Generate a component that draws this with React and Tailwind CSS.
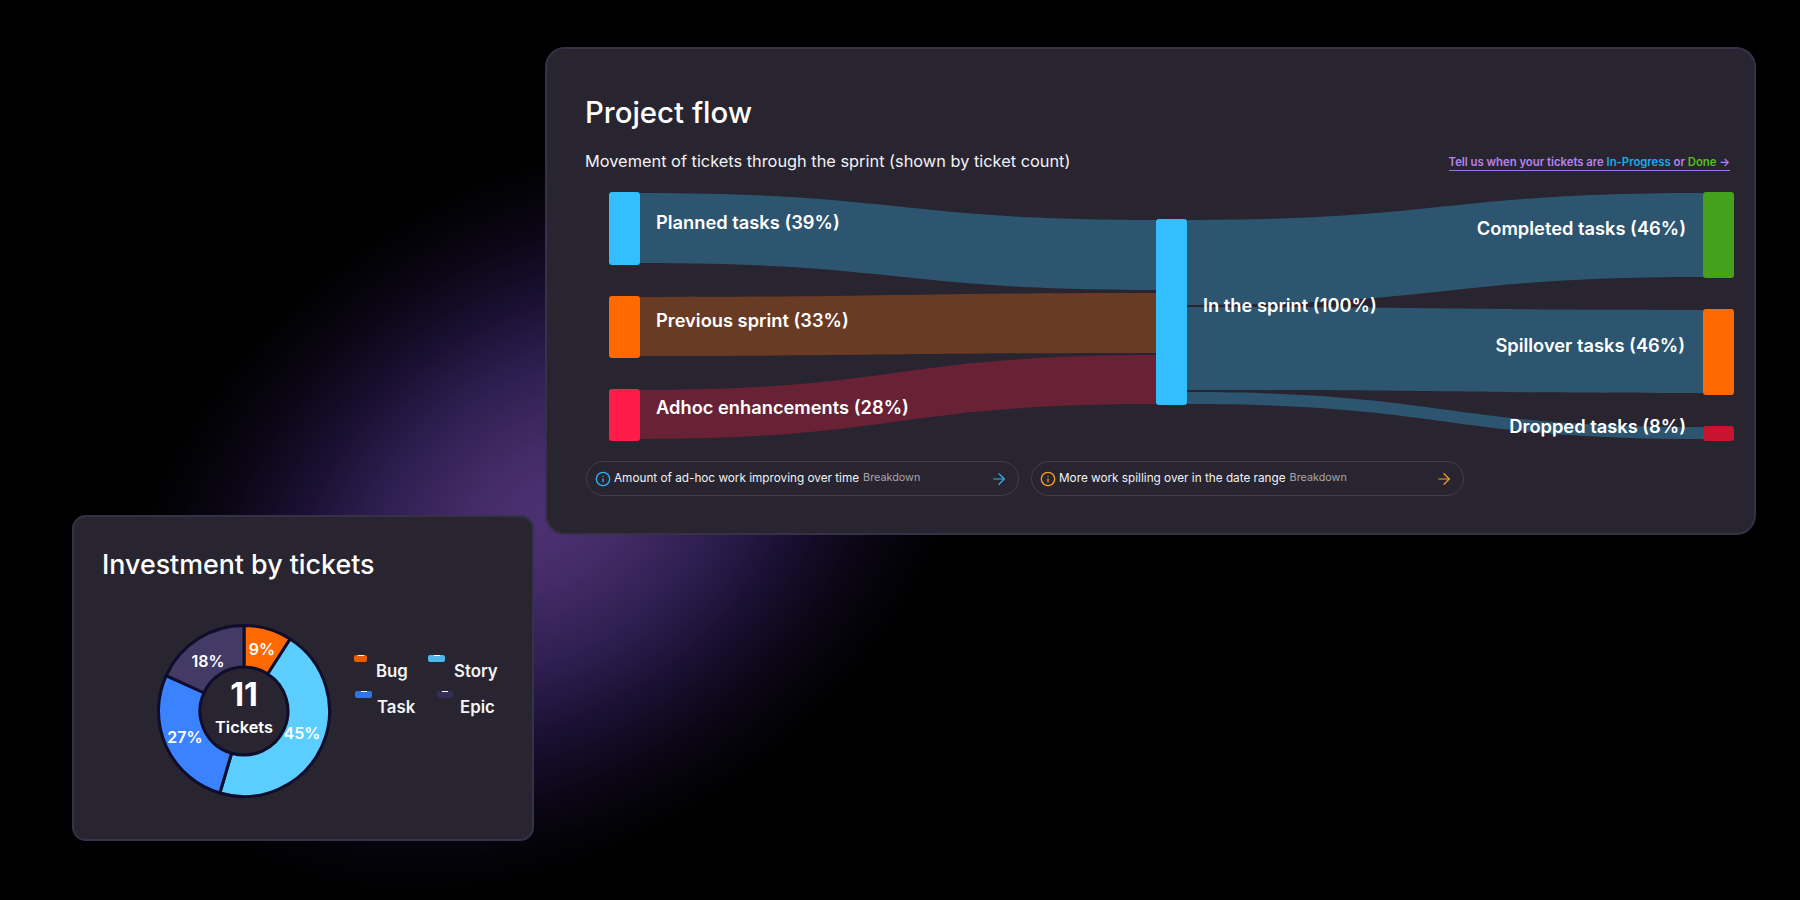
import { Info, ArrowRight } from "lucide-react";

const nodes = [
  { x: 609, y: 192, w: 31, h: 73, fill: "#33bfff" },
  { x: 609, y: 296, w: 31, h: 62, fill: "#ff6900" },
  { x: 609, y: 389, w: 31, h: 52, fill: "#ff1c48" },
  { x: 1156, y: 219, w: 31, h: 186, fill: "#33bfff" },
  { x: 1703, y: 192, w: 31, h: 86, fill: "#45a01c" },
  { x: 1703, y: 309, w: 31, h: 86, fill: "#ff6900" },
  { x: 1703, y: 426, w: 31, h: 15, fill: "#c8142f" },
];

const links = [
  { x0: 640, x1: 1156, t0: 193, b0: 263, t1: 220, b1: 290, fill: "#2d556f" },
  { x0: 640, x1: 1156, t0: 297, b0: 356, t1: 293, b1: 353, fill: "#693a24" },
  { x0: 640, x1: 1156, t0: 390, b0: 439, t1: 355, b1: 404, fill: "#682135" },
  { x0: 1187, x1: 1703, t0: 220, b0: 305, t1: 193, b1: 277, fill: "#2d556f" },
  { x0: 1187, x1: 1703, t0: 307, b0: 390, t1: 310, b1: 393, fill: "#2d556f" },
  { x0: 1187, x1: 1703, t0: 392, b0: 404, t1: 427, b1: 439, fill: "#2d556f" },
];

const linkPath = ({ x0, x1, t0, b0, t1, b1 }) => {
  const m = (x0 + x1) / 2;
  return `M${x0} ${t0}C${m} ${t0} ${m} ${t1} ${x1} ${t1}L${x1} ${b1}C${m} ${b1} ${m} ${b0} ${x0} ${b0}Z`;
};

const Sankey = () => (
  <div className="relative mt-[17px] h-[255px] w-[1150px]">
    <svg className="absolute inset-0" width="1150" height="255" viewBox="585 190 1150 255">
      {links.map((l, i) => (
        <path key={i} d={linkPath(l)} fill={l.fill} />
      ))}
      {nodes.map((n, i) => (
        <rect key={i} x={n.x} y={n.y} width={n.w} height={n.h} rx="3" fill={n.fill} />
      ))}
    </svg>
    <div className="absolute left-[71px] top-[20px] text-[18.3px] leading-[24px] font-semibold text-white">Planned tasks (39%)</div>
    <div className="absolute left-[71px] top-[118px] text-[18.3px] leading-[24px] font-semibold text-white">Previous sprint (33%)</div>
    <div className="absolute left-[71px] top-[205px] text-[18.3px] leading-[24px] font-semibold text-white">Adhoc enhancements (28%)</div>
    <div className="absolute left-[618px] top-[103px] text-[18.3px] leading-[24px] font-semibold text-white">In the sprint (100%)</div>
    <div className="absolute right-[49px] top-[26px] text-[18.3px] leading-[24px] font-semibold text-white">Completed tasks (46%)</div>
    <div className="absolute right-[50px] top-[143px] text-[18.3px] leading-[24px] font-semibold text-white">Spillover tasks (46%)</div>
    <div className="absolute right-[49px] top-[224px] text-[18.3px] leading-[24px] font-semibold text-white">Dropped tasks (8%)</div>
  </div>
);

const Pill = ({ color, text }) => (
  <div className="flex h-[35px] w-[433px] items-center rounded-full border border-[#423e4c] pl-[8px] pr-[10px]">
    <Info size={16} strokeWidth={2} style={{ color }} />
    <span className="ml-[3px] text-[11.75px] text-[#f2f2f4]">{text}</span>
    <span className="ml-[4px] text-[10.8px] text-[#a8a6ad]">Breakdown</span>
    <ArrowRight size={18} strokeWidth={1.6} className="ml-auto" style={{ color }} />
  </div>
);

const ProjectFlow = () => (
  <div className="relative mt-[47px] ml-[11px] flex h-[488px] w-[1211px] flex-col rounded-[20px] border-2 border-[#353146] bg-[#282530] pl-[38px] pt-[45px]">
    <h2 className="text-[29.4px] leading-[38px] font-medium text-white">Project flow</h2>
    <div className="mt-[17px] flex w-[1145px] items-center justify-between">
      <p className="text-[16.35px] leading-[24px] text-[#f2f2f4]">Movement of tickets through the sprint (shown by ticket count)</p>
      <a className="mt-[3px] border-b border-[#a374e0] text-[11.3px] leading-[15px] font-semibold text-[#b583ee]">
        Tell us when your tickets are <span className="text-[#1fa8e8]">In-Progress</span> or <span className="text-[#55bf1e]">Done</span> →
      </a>
    </div>
    <Sankey />
    <div className="mt-[16px] ml-[1px] flex gap-[12px]">
      <Pill color="#33b1f0" text="Amount of ad-hoc work improving over time" />
      <Pill color="#f5a11f" text="More work spilling over in the date range" />
    </div>
  </div>
);

const polar = (r, a) => {
  const t = (a * Math.PI) / 180;
  return [100 + r * Math.sin(t), 100 - r * Math.cos(t)];
};

const arc = (a0, a1, R = 85.5, r = 44) => {
  const large = a1 - a0 > 180 ? 1 : 0;
  const [x0, y0] = polar(R, a0);
  const [x1, y1] = polar(R, a1);
  const [x2, y2] = polar(r, a1);
  const [x3, y3] = polar(r, a0);
  return `M${x0} ${y0}A${R} ${R} 0 ${large} 1 ${x1} ${y1}L${x2} ${y2}A${r} ${r} 0 ${large} 0 ${x3} ${y3}Z`;
};

const slices = [
  { a0: 0, a1: 32.7, fill: "#ff6900" },
  { a0: 32.7, a1: 196.4, fill: "#5ccdff" },
  { a0: 196.4, a1: 294.5, fill: "#3b82ff" },
  { a0: 294.5, a1: 360, fill: "#433a66" },
];

const percents = [
  { x: 118, y: 38, t: "9%" },
  { x: 64, y: 50, t: "18%" },
  { x: 41, y: 126, t: "27%" },
  { x: 158, y: 122, t: "45%" },
];

const Donut = () => (
  <div className="relative h-[200px] w-[200px]">
    <svg width="200" height="200" viewBox="0 0 200 200">
      {slices.map((s, i) => (
        <path key={i} d={arc(s.a0, s.a1)} fill={s.fill} stroke="#0e0d2b" strokeWidth="3" strokeLinejoin="round" />
      ))}
      {percents.map((p) => (
        <text key={p.t} x={p.x} y={p.y} dy="0.36em" textAnchor="middle" fontSize="16" fontWeight="600" fill="#fff">
          {p.t}
        </text>
      ))}
    </svg>
    <div className="absolute inset-0 flex flex-col items-center pt-[60px] text-white">
      <span className="text-[32px] leading-[48px] font-bold">11</span>
      <span className="mt-[-4px] text-[16.4px] leading-[24px] font-semibold">Tickets</span>
    </div>
  </div>
);

const LegendItem = ({ color, label, swatch, gap, className }) => (
  <div className={className}>
    <div className={`relative h-[7px] rounded-[2px] ${swatch}`} style={{ background: color }}>
      <div className="absolute left-1/2 top-0 h-[1px] w-[6px] -translate-x-1/2 bg-white" />
    </div>
    <div className={`mt-[-1px] text-[16.8px] leading-[20px] font-semibold text-[#f5f5f5] ${gap}`}>{label}</div>
  </div>
);

const Investment = () => (
  <div className="relative mt-[515px] flex h-[326px] w-[462px] flex-col rounded-[14px] border-2 border-[#353146] bg-[#282530] pl-[28px] pt-[29px]">
    <h2 className="text-[26.8px] leading-[36px] font-medium text-white">Investment by tickets</h2>
    <div className="flex">
      <div className="ml-[42px] mt-[29px]">
        <Donut />
      </div>
      <div className="ml-[10px] mt-[73px]">
        <div className="flex">
          <LegendItem color="#e85d04" label="Bug" swatch="w-[13px]" gap="ml-[22px]" className="w-[74px]" />
          <LegendItem color="#4db8e8" label="Story" swatch="w-[17px]" gap="ml-[26px]" />
        </div>
        <div className="ml-[1px] mt-[10px] flex">
          <LegendItem color="#2f75e6" label="Task" swatch="w-[17px]" gap="ml-[22px]" className="w-[82px]" />
          <LegendItem color="#332d58" label="Epic" swatch="w-[16px]" gap="ml-[23px]" />
        </div>
      </div>
    </div>
  </div>
);

export default function App() {
  return (
    <div className="relative flex h-[900px] w-[1800px] items-start overflow-hidden bg-black pl-[72px] font-[Inter,sans-serif]">
      <div className="absolute left-[78px] top-[185px] h-[660px] w-[940px] -rotate-[35deg] bg-[radial-gradient(closest-side,#4c3172_0%,#442c68_18%,#2e1e50_42%,#190f30_62%,#0a0614_80%,#000_100%)]" />
      <Investment />
      <ProjectFlow />
    </div>
  );
}
